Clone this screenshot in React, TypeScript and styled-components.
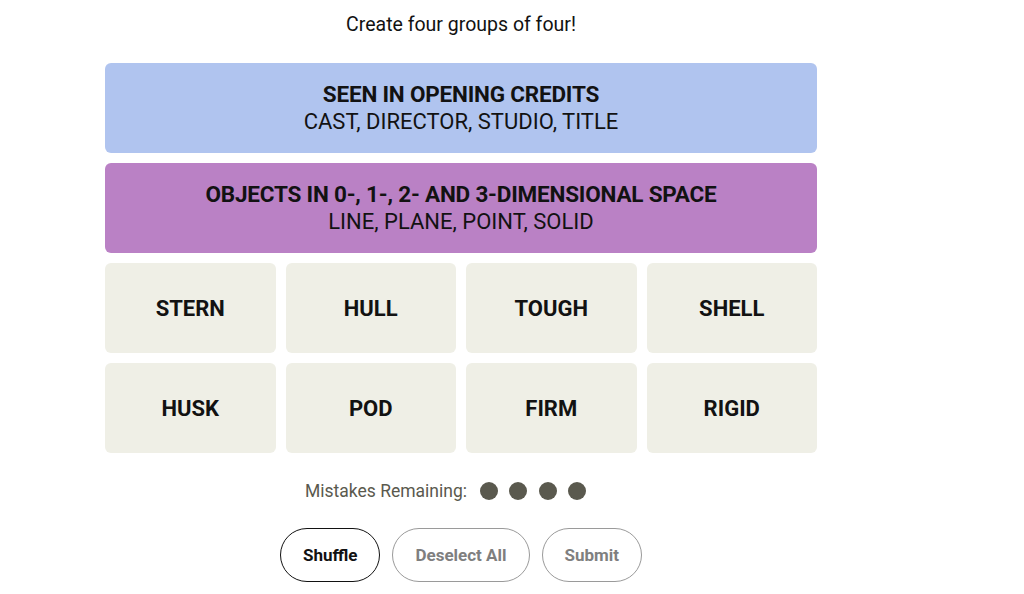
import styled, { createGlobalStyle } from "styled-components";

const GlobalStyle = createGlobalStyle`
    body {
        margin: 0;
        background: #ffffff;
        font-family: "Roboto", "Liberation Sans", sans-serif;
        color: #121212;
    }
`

const Page = styled.div`
    width: 922px;
    display: flex;
    flex-direction: column;
    align-items: center;
`

const Prompt = styled.p`
    margin: 14px 0 0;
    font-size: 19.5px;
    line-height: 22px;
    color: #121212;
`

const Board = styled.div`
    width: 712px;
    margin-top: 27px;
    display: flex;
    flex-direction: column;
    gap: 10px;
`

const SolvedGroup = styled.div<{ $color: string }>`
    height: 90px;
    border-radius: 6px;
    background: ${p => p.$color};
    display: flex;
    flex-direction: column;
    align-items: center;
    justify-content: center;
    h3 {
        margin: 0 0 2px;
        font-size: 22.5px;
        line-height: 26px;
        font-weight: 700;
        letter-spacing: -0.2px;
    }
    p {
        margin: 0;
        font-size: 22px;
        line-height: 26px;
        font-weight: 400;
    }
`

const Grid = styled.div`
    display: grid;
    grid-template-columns: repeat(4, 1fr);
    gap: 10px;
`

const Tile = styled.button`
    height: 90px;
    border: none;
    border-radius: 6px;
    background: #efefe6;
    font-family: inherit;
    font-size: 22px;
    font-weight: 700;
    color: #121212;
    cursor: pointer;
`

const Mistakes = styled.div`
    margin-top: 28px;
    padding-right: 31px;
    display: flex;
    align-items: center;
    gap: 11.5px;
    font-size: 17.5px;
    color: #5a594e;
    span {
        margin-right: 1px;
    }
`

const Dot = styled.i`
    width: 18px;
    height: 18px;
    border-radius: 50%;
    background: #5a594e;
`

const Actions = styled.div`
    margin-top: 27px;
    display: flex;
    gap: 12px;
`

const PillButton = styled.button<{ $active?: boolean }>`
    height: 54px;
    padding: 0 22px;
    border-radius: 32px;
    background: #fff;
    border: 1px solid ${p => p.$active ? "#121212" : "#9a9a9a"};
    color: ${p => p.$active ? "#121212" : "#7f7f7f"};
    font-family: inherit;
    font-size: 17px;
    font-weight: 700;
`

const solved = [
    { title: "SEEN IN OPENING CREDITS", words: "CAST, DIRECTOR, STUDIO, TITLE", color: "#b0c4ef" },
    { title: "OBJECTS IN 0-, 1-, 2- AND 3-DIMENSIONAL SPACE", words: "LINE, PLANE, POINT, SOLID", color: "#ba81c5" },
]

const words = ["STERN", "HULL", "TOUGH", "SHELL", "HUSK", "POD", "FIRM", "RIGID"]

function App() {
    return (
        <Page>
            <GlobalStyle />
            <Prompt>Create four groups of four!</Prompt>
            <Board>
                {solved.map(g => (
                    <SolvedGroup key={g.title} $color={g.color}>
                        <h3>{g.title}</h3>
                        <p>{g.words}</p>
                    </SolvedGroup>
                ))}
                <Grid>
                    {words.map(w => <Tile key={w}>{w}</Tile>)}
                </Grid>
            </Board>
            <Mistakes>
                <span>Mistakes Remaining:</span>
                <Dot /><Dot /><Dot /><Dot />
            </Mistakes>
            <Actions>
                <PillButton $active>Shuffle</PillButton>
                <PillButton>Deselect All</PillButton>
                <PillButton>Submit</PillButton>
            </Actions>
        </Page>
    )
}

export default App
